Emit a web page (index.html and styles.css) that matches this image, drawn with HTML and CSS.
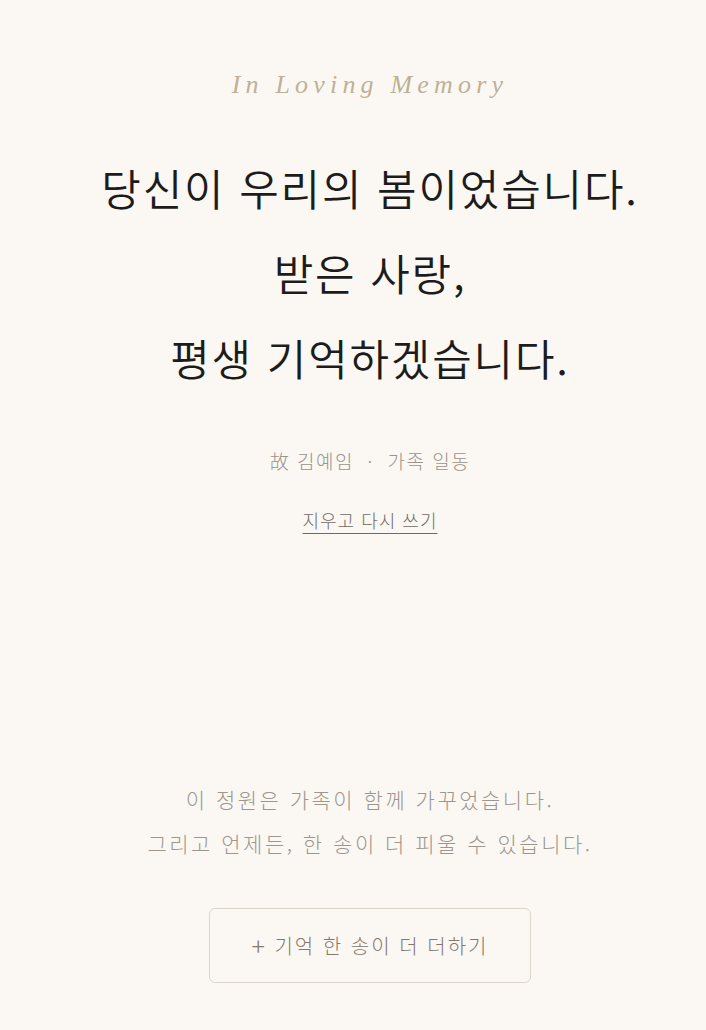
FILE: index.html
```html
<!DOCTYPE html>
<html lang="ko">
<head>
<meta charset="utf-8">
<link rel="stylesheet" href="styles.css">
</head>
<body>
<main class="page">
  <section class="hero">
    <p class="eyebrow">In Loving Memory</p>
    <h1 class="message">
      <span class="line">당신이 우리의 봄이었습니다.</span>
      <span class="line">받은 사랑,</span>
      <span class="line">평생 기억하겠습니다.</span>
    </h1>
    <p class="signature">故 김예임 &nbsp;·&nbsp; 가족 일동</p>
    <a class="rewrite" href="#">지우고 다시 쓰기</a>
  </section>
  <section class="garden">
    <p class="note">이 정원은 가족이 함께 가꾸었습니다.<br>그리고 언제든, 한 송이 더 피울 수 있습니다.</p>
    <button class="add" type="button"><span class="plus">+</span> 기억 한 송이 더 더하기</button>
  </section>
</main>
</body>
</html>
```
FILE: styles.css
```css
html, body {
  margin: 0;
  padding: 0;
  background: #fbf8f3;
}
body {
  font-family: "Noto Sans CJK KR", "Noto Sans", sans-serif;
  color: #1f1f1f;
}
.page {
  display: flex;
  flex-direction: column;
  align-items: center;
  min-height: 1030px;
  padding-left: 34px;
}
.hero {
  display: flex;
  flex-direction: column;
  align-items: center;
  padding-top: 66px;
}
.eyebrow {
  margin: 0;
  font-family: "Liberation Serif", serif;
  font-style: italic;
  font-size: 26px;
  letter-spacing: 5.2px;
  color: #bfb197;
  line-height: 38px;
}
.message {
  margin: 41px 0 0;
  display: flex;
  flex-direction: column;
  align-items: center;
  font-weight: 350;
  font-size: 43px;
  letter-spacing: 1.8px;
  line-height: 85px;
  color: #1c1c1c;
}
.signature {
  margin: 46px 0 0;
  font-size: 19px;
  font-weight: 300;
  letter-spacing: 1.5px;
  color: #99938c;
  line-height: 30px;
}
.rewrite {
  margin-top: 32px;
  font-size: 18px;
  font-weight: 300;
  letter-spacing: 1px;
  color: #6f6a64;
  text-decoration: underline;
  text-underline-offset: 5px;
  line-height: 24px;
}
.garden {
  display: flex;
  flex-direction: column;
  align-items: center;
  margin-top: 245px;
}
.note {
  margin: 0;
  text-align: center;
  font-size: 21px;
  letter-spacing: 2.5px;
  line-height: 44px;
  color: #9c968f;
  font-weight: 300;
}
.add {
  margin-top: 43px;
  width: 322px;
  height: 75px;
  border: 1px solid #dcd6cd;
  border-radius: 6px;
  background: transparent;
  font-family: "Noto Sans CJK KR", "Noto Sans", sans-serif;
  font-size: 20px;
  font-weight: 300;
  color: #85776a;
  letter-spacing: 2px;
}
.plus {
  font-size: 25px;
  font-weight: 200;
  line-height: 1;
  vertical-align: -2px;
}
```
